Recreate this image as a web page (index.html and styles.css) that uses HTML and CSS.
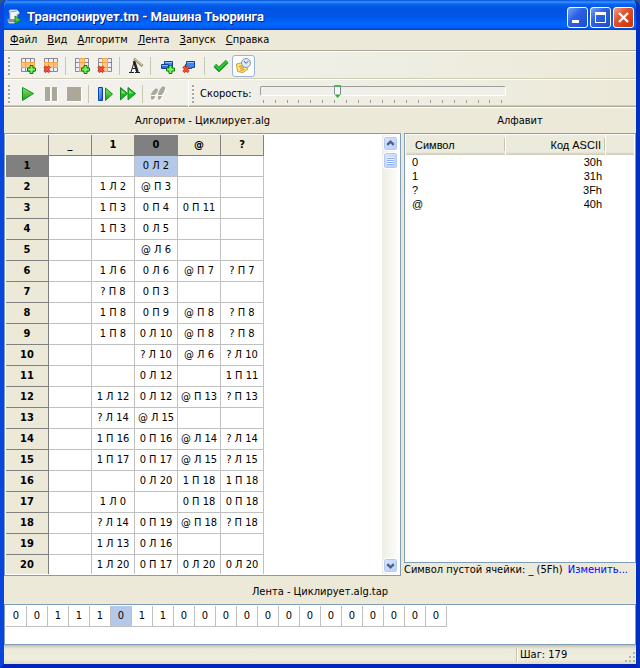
FILE: index.html
```html
<!DOCTYPE html>
<html lang="ru">
<head>
<meta charset="utf-8">
<title>Транспонирует.tm - Машина Тьюринга</title>
<link rel="stylesheet" href="styles.css">
</head>
<body>
<svg class="defs" aria-hidden="true">
  <defs>
    <linearGradient id="green" x1="0" y1="0" x2="0" y2="1"><stop offset="0" stop-color="#8fe070"/><stop offset="1" stop-color="#12a012"/></linearGradient>
    <linearGradient id="blue" x1="0" y1="0" x2="1" y2="1"><stop offset="0" stop-color="#9ad0ff"/><stop offset="1" stop-color="#0a50c8"/></linearGradient>
    <g id="plus"><path d="M10 7.500h3v2.500h2.500v3H13v2.500h-3V13H7.500v-3H10z" fill="#7bf060" stroke="#0a7a10"/></g>
    <g id="cross"><path d="M1.500 8.500l5 5.500M6.500 8.500l-5 5.500" stroke="#c22a14" stroke-width="3"/><path d="M1.500 8.500l5 5.500M6.500 8.500l-5 5.500" stroke="#f4573a" stroke-width="1.500"/></g>
    <g id="cells"><path d="M1 1h14v13H1z" fill="#eef0fa"/><path d="M1.500 .5h13v13h-13zM5.500 1v13M10.500 1v13M1 4.500h14M1 9.500h14" fill="none" stroke="#8b8792"/></g>
    <g id="rowgrid"><use href="#cells"/><path d="M1 4h14v6H1z" fill="#f5a54a"/><path d="M2 5h3v4H2zM6 5h4v4H6zM11 5h3v4h-3z" fill="#ffc47a"/></g>
    <g id="colgrid"><use href="#cells"/><path d="M5 0h6v14H5z" fill="#f5a54a"/><path d="M6 1h4v3H6zM6 5h4v4H6zM6 10h4v3H6z" fill="#ffc98a"/></g>
    <g id="boxes"><path d="M5.500 3.500h8v6h-8z" fill="#3b8cf0" stroke="#123f9c"/><path d="M2.500 6.500h7v4h-7z" fill="#2a6fe0" stroke="#123f9c"/><path d="M6 4.500h7M3 7.500h6" stroke="#8cc4ff"/></g>
  </defs>
</svg>
<div class="window">
  <header class="titlebar">
    <svg class="icon" viewBox="0 0 16 16" aria-hidden="true"><path d="M4 1h7l2 2v2h-2v6l-1 3H3l-1-3h2V4L3 2z" fill="#f4f6fa" stroke="#b8c0d0"/><path d="M1 10h7l2 3H3z" fill="#8b909c"/><path d="M4 3l7-1" stroke="#9aa3b5"/><path d="M9 7l6 4-6 4z" fill="url(#green)" stroke="#0c8a18"/></svg>
    <h1>Транспонирует.tm - Машина Тьюринга</h1>
    <button class="caption" aria-label="Свернуть"><svg viewBox="0 0 19 19"><path d="M4 12h7v3H4z"/></svg></button>
    <button class="caption" aria-label="Развернуть"><svg viewBox="0 0 19 19"><path d="M4 4h11v11H4zM5 7v7h9V7z" fill-rule="evenodd"/></svg></button>
    <button class="caption close" aria-label="Закрыть"><svg viewBox="0 0 19 19"><path d="M5 5l9 9M14 5l-9 9" stroke="#fff" stroke-width="2.400"/></svg></button>
  </header>

  <nav class="menu">
    <button><u>Ф</u>айл</button><button><u>В</u>ид</button><button><u>А</u>лгоритм</button><button><u>Л</u>ента</button><button><u>З</u>апуск</button><button><u>С</u>правка</button>
  </nav>

  <div class="toolbar">
    <i class="grip"></i>
    <button aria-label="Вставить строку"><svg class="icon" viewBox="0 0 16 16"><use href="#rowgrid"/><use href="#plus"/></svg></button>
    <button aria-label="Удалить строку"><svg class="icon" viewBox="0 0 16 16"><use href="#rowgrid"/><use href="#cross"/></svg></button>
    <i class="sep"></i>
    <button aria-label="Вставить столбец"><svg class="icon" viewBox="0 0 16 16"><use href="#colgrid"/><use href="#plus"/></svg></button>
    <button aria-label="Удалить столбец"><svg class="icon" viewBox="0 0 16 16"><use href="#colgrid"/><use href="#cross"/></svg></button>
    <i class="sep"></i>
    <button aria-label="Шрифт"><svg class="icon" viewBox="0 0 16 16"><path d="M1 14.500h5M7 14.500h5M3 14L6.500 3M4.500 10.500h4" stroke="#222" fill="none"/><path d="M6 3L9.500 14" stroke="#222" stroke-width="2.500"/><path d="M6 .5l8.500 7.500" stroke="#8a8068" stroke-width="2.500"/><path d="M6.500 .5l7.500 6.500" stroke="#dccd9f" stroke-width="1.200"/></svg></button>
    <i class="sep"></i>
    <button aria-label="Добавить символ"><svg class="icon" viewBox="0 0 16 16"><use href="#boxes"/><use href="#plus"/></svg></button>
    <button aria-label="Удалить символ"><svg class="icon" viewBox="0 0 16 16"><path d="M4.500 3.500h8v6h-3v1h-6v-4h1z" fill="#3b8cf0" stroke="#123f9c"/><path d="M5 4.500h7" stroke="#8cc4ff"/><use href="#cross"/></svg></button>
    <i class="sep"></i>
    <button aria-label="Проверить"><svg class="icon" viewBox="0 0 16 16"><path d="M2 7.500L6 11.500 14 3.500" stroke="#0c8618" stroke-width="4" fill="none"/><path d="M2 7L6 11 14 3" stroke="#2fc32f" stroke-width="2.500" fill="none"/></svg></button>
    <button class="pressed" aria-pressed="true" aria-label="Журнал"><svg class="icon" viewBox="0 0 16 16"><path d="M.5 6l7-1.500L12 11l-5 3.500-5.500-1z" fill="#ffe77c" stroke="#c9a038"/><path d="M3 8.500l5-1M4 10.500l4-1M4.500 12.500l4-1" stroke="#b98a28"/><circle cx="10" cy="5" r="4.500" fill="#dce9f7" stroke="#7e96b4"/><path d="M8 3l2 2.500L12.500 3" fill="none" stroke="#4b6a92"/></svg></button>
  </div>

  <div class="toolbar lower">
    <i class="grip"></i>
    <button aria-label="Пуск"><svg class="icon" viewBox="0 0 16 16"><path d="M2.500 1.500l11 6-11 7z" fill="url(#green)" stroke="#149019"/></svg></button>
    <button aria-label="Пауза" disabled><svg class="icon" viewBox="0 0 16 16"><path d="M3 2h5v14H3zM10 2h5v14h-5z" fill="#fff"/><path d="M2 1h5v14H2zM9 1h5v14H9z" fill="#aca899"/></svg></button>
    <button aria-label="Стоп" disabled><svg class="icon" viewBox="0 0 16 16"><path d="M2 2h14v14H2z" fill="#fff"/><path d="M1 1h14v14H1z" fill="#aca899"/></svg></button>
    <i class="sep"></i>
    <button aria-label="Шаг"><svg class="icon" viewBox="0 0 16 16"><path d="M1.500 1.500h4v13h-4z" fill="url(#blue)" stroke="#0a3fb0"/><path d="M8.500 2l7 6-7 6.500z" fill="url(#green)" stroke="#149019"/></svg></button>
    <button aria-label="Быстро"><svg class="icon" viewBox="0 0 16 16"><path d="M.5 1.500l7 6-7 6.500zM8 1.500l7.500 6-7.500 6.500z" fill="#21b52a" stroke="#0e8b18"/><path d="M1.500 4l4 3.500h-4zM9 4l4 3.500H9z" fill="#8ee07c"/></svg></button>
    <i class="sep"></i>
    <button aria-label="Шаги" disabled><svg class="icon" viewBox="0 0 16 16"><path d="M4 5c1-2 4-2 4 0s-2 4-3 5H1c0-2 1-3 3-5zM1 12h4c0 3-4 4-4 1zM11 3c1-2 5-2 4 1 0 2-2 4-3 6H8c0-2 1-5 3-7zM8 11h4c-1 4-4 5-4 2z" fill="#fff"/><path d="M3 4c1-2 4-2 4 0s-2 4-3 5H0c0-2 1-3 3-5zM0 10h4c0 4-4 5-4 2zM10 2c1-2 5-2 4 1 0 2-2 4-3 6H7c0-2 1-5 3-7zM7 10h4c-1 4-4 5-4 2z" fill="#aca899"/></svg></button>
    <div class="speed">
      <i class="grip"></i>
      <label for="speed">Скорость:</label>
      <div class="slider">
        <input id="speed" type="range" min="0" max="100" value="31">
        <div class="ticks"><i></i><i></i><i></i><i></i><i></i><i></i><i></i><i></i><i></i><i></i><i></i><i></i><i></i><i></i><i></i><i></i><i></i><i></i><i></i><i></i><i></i></div>
      </div>
    </div>
  </div>

  <main class="panes">
    <section class="program">
      <h2>Алгоритм - Циклирует.alg</h2>
      <div class="box">
        <div class="sheet">
          <table class="grid">
            <thead><tr><td></td><th>_</th><th>1</th><th class="current">0</th><th>@</th><th>?</th></tr></thead>
            <tbody>
              <tr><th class="current">1</th><td></td><td></td><td class="selected">0 Л 2</td><td></td><td></td></tr>
              <tr><th>2</th><td></td><td>1 Л 2</td><td>@ П 3</td><td></td><td></td></tr>
              <tr><th>3</th><td></td><td>1 П 3</td><td>0 П 4</td><td>0 П 11</td><td></td></tr>
              <tr><th>4</th><td></td><td>1 П 3</td><td>0 Л 5</td><td></td><td></td></tr>
              <tr><th>5</th><td></td><td></td><td>@ Л 6</td><td></td><td></td></tr>
              <tr><th>6</th><td></td><td>1 Л 6</td><td>0 Л 6</td><td>@ П 7</td><td>? П 7</td></tr>
              <tr><th>7</th><td></td><td>? П 8</td><td>0 П 3</td><td></td><td></td></tr>
              <tr><th>8</th><td></td><td>1 П 8</td><td>0 П 9</td><td>@ П 8</td><td>? П 8</td></tr>
              <tr><th>9</th><td></td><td>1 П 8</td><td>0 Л 10</td><td>@ П 8</td><td>? П 8</td></tr>
              <tr><th>10</th><td></td><td></td><td>? Л 10</td><td>@ Л 6</td><td>? Л 10</td></tr>
              <tr><th>11</th><td></td><td></td><td>0 Л 12</td><td></td><td>1 П 11</td></tr>
              <tr><th>12</th><td></td><td>1 Л 12</td><td>0 Л 12</td><td>@ П 13</td><td>? П 13</td></tr>
              <tr><th>13</th><td></td><td>? Л 14</td><td>@ Л 15</td><td></td><td></td></tr>
              <tr><th>14</th><td></td><td>1 П 16</td><td>0 П 16</td><td>@ Л 14</td><td>? Л 14</td></tr>
              <tr><th>15</th><td></td><td>1 П 17</td><td>0 П 17</td><td>@ Л 15</td><td>? Л 15</td></tr>
              <tr><th>16</th><td></td><td></td><td>0 Л 20</td><td>1 П 18</td><td>1 П 18</td></tr>
              <tr><th>17</th><td></td><td>1 Л 0</td><td></td><td>0 П 18</td><td>0 П 18</td></tr>
              <tr><th>18</th><td></td><td>? Л 14</td><td>0 П 19</td><td>@ П 18</td><td>? П 18</td></tr>
              <tr><th>19</th><td></td><td>1 Л 13</td><td>0 Л 16</td><td></td><td></td></tr>
              <tr><th>20</th><td></td><td>1 Л 20</td><td>0 П 17</td><td>0 Л 20</td><td>0 Л 20</td></tr>
            </tbody>
          </table>
        </div>
        <div class="scrollbar">
          <button aria-label="Вверх"><svg viewBox="0 0 14 14"><path d="M3.500 8.500L7 5l3.500 3.500"/></svg></button>
          <div class="thumb"></div>
          <button class="down" aria-label="Вниз"><svg viewBox="0 0 14 14"><path d="M3.500 5.500L7 9l3.500-3.500"/></svg></button>
        </div>
      </div>
    </section>

    <section class="alphabet">
      <h2>Алфавит</h2>
      <div class="box">
        <table class="list">
          <thead><tr><th>Символ</th><th>Код ASCII</th><th></th></tr></thead>
          <tbody>
            <tr><td>0</td><td>30h</td><td></td></tr>
            <tr><td>1</td><td>31h</td><td></td></tr>
            <tr><td>?</td><td>3Fh</td><td></td></tr>
            <tr><td>@</td><td>40h</td><td></td></tr>
          </tbody>
        </table>
      </div>
      <p class="blank"><span>Символ пустой ячейки: _ (5Fh)</span><a href="#">Изменить...</a></p>
    </section>
  </main>

  <section class="tape">
    <h2>Лента - Циклирует.alg.tap</h2>
    <div class="box">
      <ol><li>0</li><li>0</li><li>1</li><li>1</li><li>1</li><li class="selected">0</li><li>1</li><li>1</li><li>0</li><li>0</li><li>0</li><li>0</li><li>0</li><li>0</li><li>0</li><li>0</li><li>0</li><li>0</li><li>0</li><li>0</li><li>0</li></ol>
    </div>
  </section>

  <footer class="status">
    <span>Шаг: 179</span>
    <svg viewBox="0 0 12 12" aria-hidden="true"><path d="M9 1h2v2H9zM5 5h2v2H5zM9 5h2v2H9zM1 9h2v2H1zM5 9h2v2H5zM9 9h2v2H9z" fill="#b8b4a3"/></svg>
  </footer>
</div>
</body>
</html>
```
FILE: styles.css
```css
:root {
  --face: #ece9d8;
  --edge: #7f9db9;
  --line: #c0c0c0;
  --dark: #808080;
  --select: #b4c9e9;
}
* { box-sizing: border-box; }
body {
  margin: 0;
  background: #24588c;
  color: #000;
  font: 11px/14px "DejaVu Sans Condensed", "DejaVu Sans", sans-serif;
}
button { margin: 0; padding: 0; border: 0; background: none; color: inherit; font: inherit; }
h1, h2, p, ol { margin: 0; padding: 0; }
h2 { font-size: 11px; font-weight: normal; text-align: center; }
.defs { position: absolute; width: 0; height: 0; }
.icon { display: block; width: 16px; height: 16px; flex: none; }

.window {
  display: flex;
  flex-direction: column;
  height: 100vh;
  min-height: 400px;
  border: solid #0845dc;
  border-width: 0 4px 4px;
  border-radius: 8px 8px 0 0;
  border-right-color: #0030c0;
  border-bottom-color: #0024b4;
  background: var(--face);
  overflow: hidden;
}

.titlebar {
  display: flex;
  flex: none;
  align-items: center;
  gap: 2px;
  height: 30px;
  margin: 0 -4px;
  padding: 4px 6px 0;
  background: linear-gradient(#0050d8 0, #3c92ff 2px, #0866f0 4px, #0054e4 8px, #0056e8 16px, #0066ff 24px, #0062fa 27px, #0040c8 30px);
}
.titlebar h1 {
  flex: 1;
  margin-left: 3px;
  color: #fff;
  font: bold 13px/18px Roboto, "Open Sans", sans-serif;
  text-shadow: 1px 1px #0a1883;
  white-space: nowrap;
}
.caption {
  width: 21px;
  height: 21px;
  border: 1px solid #fff;
  border-radius: 3px;
  background: linear-gradient(135deg, #7aa2f4, #2c62e4 40%, #1c4cd0);
}
.caption svg { display: block; width: 19px; height: 19px; fill: #fff; }
.close { background: linear-gradient(135deg, #f0a088, #e0502c 40%, #c83408); }

.menu {
  display: flex;
  flex: none;
  height: 22px;
  padding: 0 1px 2px;
  border-bottom: 1px solid #fff;
  box-shadow: inset 0 -1px #aca899;
}
.menu button { padding: 0 5px; }

.toolbar {
  display: flex;
  flex: none;
  align-items: center;
  height: 28px;
  padding: 0 4px;
  border-bottom: 1px solid #fff;
  background: linear-gradient(90deg, #f3f2ef, #efeee3 60%, var(--face));
  box-shadow: inset 0 -1px #d0ccb4;
}
.toolbar button { display: grid; place-items: center; width: 23px; height: 22px; }
.toolbar .pressed { border: 1px solid #98b5d8; border-radius: 3px; background: #fdfdfb; }
.grip {
  width: 2px;
  height: 18px;
  margin-right: 6px;
  background: repeating-linear-gradient(#aaa69a 0 2px, #f8f7f3 2px 4px);
}
.sep { width: 1px; height: 18px; margin: 0 4px 0 3px; background: #cac6ae; }
.lower { box-shadow: inset 0 -1px #aca899, inset 0 -2px #d0ccb4; }
.speed {
  display: flex;
  align-items: center;
  align-self: stretch;
  margin-left: 18px;
  padding-left: 3px;
  border-left: 1px solid #fff;
}
.slider { width: 246px; margin-left: 8px; }
.slider input {
  display: block;
  width: 100%;
  height: 13px;
  margin: 0;
  background: none;
  appearance: none;
}
.slider input::-webkit-slider-runnable-track {
  height: 10px;
  border: 1px solid;
  border-color: #9d9c99 #fff #fff #9d9c99;
  border-radius: 2px;
  background: #f0efea;
}
.slider input::-webkit-slider-thumb {
  width: 7px;
  height: 13px;
  margin-top: -2px;
  appearance: none;
  clip-path: polygon(0 0, 100% 0, 100% 70%, 50% 100%, 0 70%);
  border: solid #778892;
  border-width: 2px 1px 0;
  border-top-color: #3fc048;
  background: linear-gradient(#f3f7fa 7px, #2fae38 8px);
}
.ticks { display: flex; justify-content: space-between; margin-top: 2px; padding: 0 3px; }
.ticks i { width: 1px; height: 3px; background: #9d9c99; }

.panes { display: flex; flex: 1; gap: 3px; min-height: 0; }
.panes section { display: flex; flex-direction: column; min-width: 0; }
.panes h2 { flex: none; height: 25px; padding-top: 6px; }
.program { flex: 397; }
.alphabet { flex: 232; }
.box { border: 1px solid var(--edge); background: #fff; padding: 1px; }
.program .box { display: flex; flex: 1; min-height: 0; }
.alphabet .box { flex: 1; min-height: 0; }
.sheet { flex: 1; overflow: hidden; }

.grid { width: 258px; table-layout: fixed; border-spacing: 0; }
.grid tr { height: 21px; }
.grid th, .grid td {
  padding: 0;
  border: solid var(--line);
  border-width: 0 1px 1px 0;
  line-height: 20px;
  text-align: center;
  white-space: nowrap;
}
.grid th, .grid thead td { border-color: var(--dark); background: var(--face); }
.grid .current { background: var(--dark); }
.grid .selected, .selected { background: var(--select); }

.scrollbar {
  display: flex;
  flex-direction: column;
  gap: 1px;
  width: 17px;
  padding: 1px;
  background: linear-gradient(90deg, #eeede5, #fefefb);
}
.scrollbar button, .thumb {
  width: 15px;
  height: 15px;
  border: 1px solid #fff;
  border-radius: 3px;
  background: linear-gradient(135deg, #dbe5fd, #b9cdfa);
  box-shadow: inset 0 0 0 1px #b4c8f6;
}
.scrollbar svg { display: block; width: 13px; height: 13px; fill: none; stroke: #4d6185; stroke-width: 2.5px; }
.thumb { display: grid; place-items: center; height: 17px; }
.thumb::before { content: ""; width: 7px; height: 8px; background: repeating-linear-gradient(#eef4fe 0 1px, #8cb0f8 1px 2px); }
.down { margin-top: auto; }

.list { width: 100%; table-layout: fixed; border-spacing: 0; font: 11px/14px "Liberation Sans", sans-serif; }
.list th, .list td { padding: 0 4px 0 6px; text-align: left; font-weight: normal; }
.list th {
  height: 20px;
  padding-left: 9px;
  border-right: 1px solid #fff;
  background: linear-gradient(90deg, transparent calc(100% - 1px), #c7c5b2 0) 0 3px / 100% 13px no-repeat, linear-gradient(#ebeadb 17px, #cbc7b8);
}
.list th:nth-child(1) { width: 100px; }
.list th:nth-child(2) { width: 100px; }
.list th:nth-child(3) { border: 0; background: linear-gradient(#ebeadb 17px, #cbc7b8); }
.list th:nth-child(2), .list td:nth-child(2) { text-align: right; }
.blank { display: flex; flex: none; justify-content: space-between; height: 13px; padding-right: 8px; white-space: nowrap; }
.blank a { color: #00f; text-decoration: none; }

.tape { flex: none; }
.tape h2 { height: 28px; padding-top: 9px; }
.tape .box { height: 41px; }
.tape ol { display: flex; list-style: none; }
.tape li {
  width: 21px;
  height: 21px;
  border: solid var(--line);
  border-width: 0 1px 1px 0;
  line-height: 20px;
  text-align: center;
}

.status {
  display: flex;
  flex: none;
  justify-content: flex-end;
  align-items: center;
  height: 19px;
  background: linear-gradient(#c4c1b0, #eceadb 4px, #efeddd 14px, #e0dcc8);
}
.status span { width: 108px; padding-left: 3px; border-left: 1px solid #c7c5b2; box-shadow: inset 1px 0 #fff; }
.status svg { width: 12px; height: 12px; margin-top: 4px; }
```
